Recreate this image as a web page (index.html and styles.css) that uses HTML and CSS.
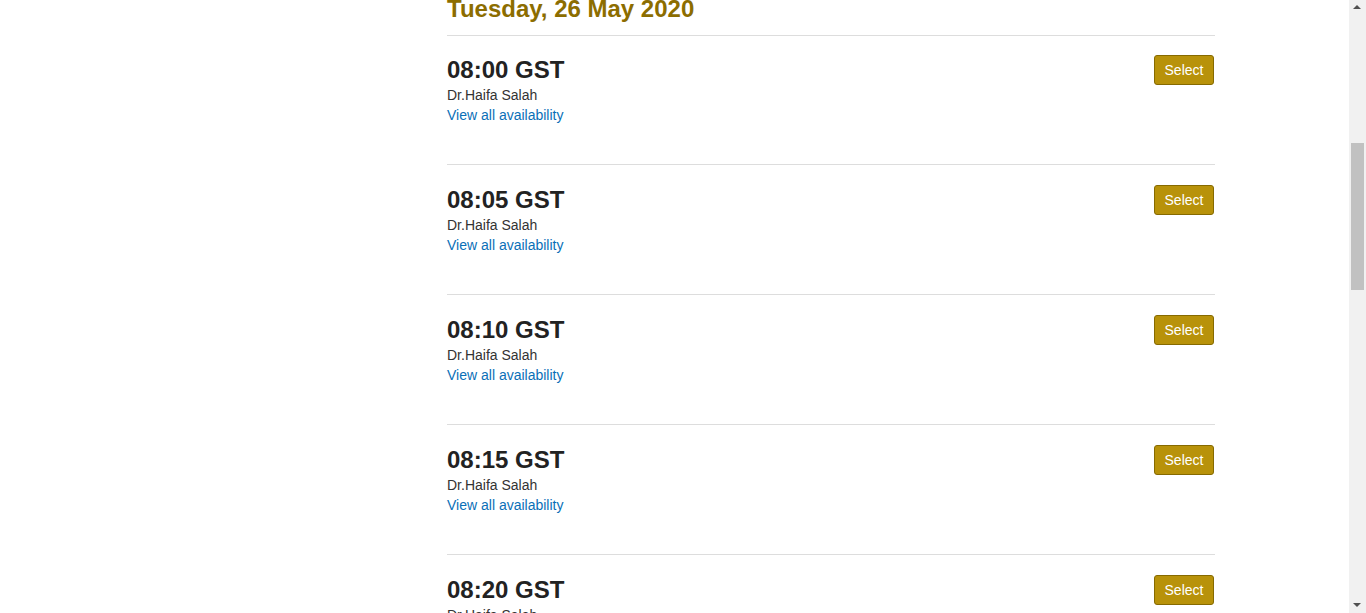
FILE: index.html
```html
<!DOCTYPE html>
<html lang="en">
<head>
<meta charset="utf-8">
<title>Availability</title>
<link rel="stylesheet" href="styles.css">
</head>
<body>
<div class="viewport">
  <main class="page">
    <section class="day">
      <h2 class="day-title">Tuesday, 26 May 2020</h2>
      <div class="slot">
        <div class="slot-info">
          <div class="slot-time">08:00 GST</div>
          <div class="slot-doctor">Dr.Haifa Salah</div>
          <a class="slot-link" href="#">View all availability</a>
        </div>
        <button class="btn-select" type="button">Select</button>
      </div>
      <div class="slot">
        <div class="slot-info">
          <div class="slot-time">08:05 GST</div>
          <div class="slot-doctor">Dr.Haifa Salah</div>
          <a class="slot-link" href="#">View all availability</a>
        </div>
        <button class="btn-select" type="button">Select</button>
      </div>
      <div class="slot">
        <div class="slot-info">
          <div class="slot-time">08:10 GST</div>
          <div class="slot-doctor">Dr.Haifa Salah</div>
          <a class="slot-link" href="#">View all availability</a>
        </div>
        <button class="btn-select" type="button">Select</button>
      </div>
      <div class="slot">
        <div class="slot-info">
          <div class="slot-time">08:15 GST</div>
          <div class="slot-doctor">Dr.Haifa Salah</div>
          <a class="slot-link" href="#">View all availability</a>
        </div>
        <button class="btn-select" type="button">Select</button>
      </div>
      <div class="slot">
        <div class="slot-info">
          <div class="slot-time">08:20 GST</div>
          <div class="slot-doctor">Dr.Haifa Salah</div>
          <a class="slot-link" href="#">View all availability</a>
        </div>
        <button class="btn-select" type="button">Select</button>
      </div>
    </section>
  </main>
  <div class="scrollbar" aria-hidden="true">
    <div class="sb-arrow sb-up"></div>
    <div class="sb-track"><div class="sb-thumb"></div></div>
    <div class="sb-arrow sb-down"></div>
  </div>
</div>
</body>
</html>
```
FILE: styles.css
```css
* { box-sizing: border-box; }
html, body {
  margin: 0;
  padding: 0;
  height: 100%;
  overflow: hidden;
  background: #fff;
  font-family: "Liberation Sans", Arial, sans-serif;
}
.viewport {
  display: flex;
  height: 613px;
  overflow: hidden;
}
.page {
  flex: 1;
  overflow: hidden;
  padding-left: 447px;
}
.day {
  width: 768px;
}
.day-title {
  margin: 0 0 17px;
  font-size: 24px;
  line-height: 18px;
  font-weight: bold;
  color: #8c6d00;
}
.slot {
  display: flex;
  justify-content: space-between;
  align-items: flex-start;
  border-top: 1px solid #dddddd;
  padding: 20px 1px 39px 0;
}
.day-title + .slot {
  padding-top: 19px;
}
.slot-info {
  display: flex;
  flex-direction: column;
  align-items: flex-start;
}
.slot-time {
  font-size: 24px;
  line-height: 30px;
  font-weight: bold;
  color: #222222;
}
.slot-doctor {
  font-size: 14px;
  line-height: 20px;
  color: #333333;
}
.slot-link {
  font-size: 14px;
  line-height: 20px;
  color: #0a6fb7;
  text-decoration: none;
}
.btn-select {
  width: 60px;
  height: 30px;
  padding: 0;
  background: #b8920a;
  border: 1px solid #866a00;
  border-radius: 3px;
  color: #ffffff;
  font-family: "Liberation Sans", Arial, sans-serif;
  font-size: 14px;
  line-height: 28px;
}
.scrollbar {
  width: 17px;
  flex: none;
  background: #f1f1f1;
  display: flex;
  flex-direction: column;
  align-items: center;
}
.sb-arrow {
  height: 17px;
  width: 17px;
  position: relative;
}
.sb-arrow::after {
  content: "";
  position: absolute;
  left: 4px;
  width: 0;
  height: 0;
  border-left: 4px solid transparent;
  border-right: 4px solid transparent;
}
.sb-up::after { top: 5px; border-bottom: 4px solid #505050; }
.sb-down::after { top: 7px; border-top: 4px solid #505050; }
.sb-track {
  flex: 1;
  width: 100%;
  padding-top: 126px;
  display: flex;
  justify-content: center;
}
.sb-thumb {
  width: 13px;
  height: 147px;
  background: #c1c1c1;
}
```
